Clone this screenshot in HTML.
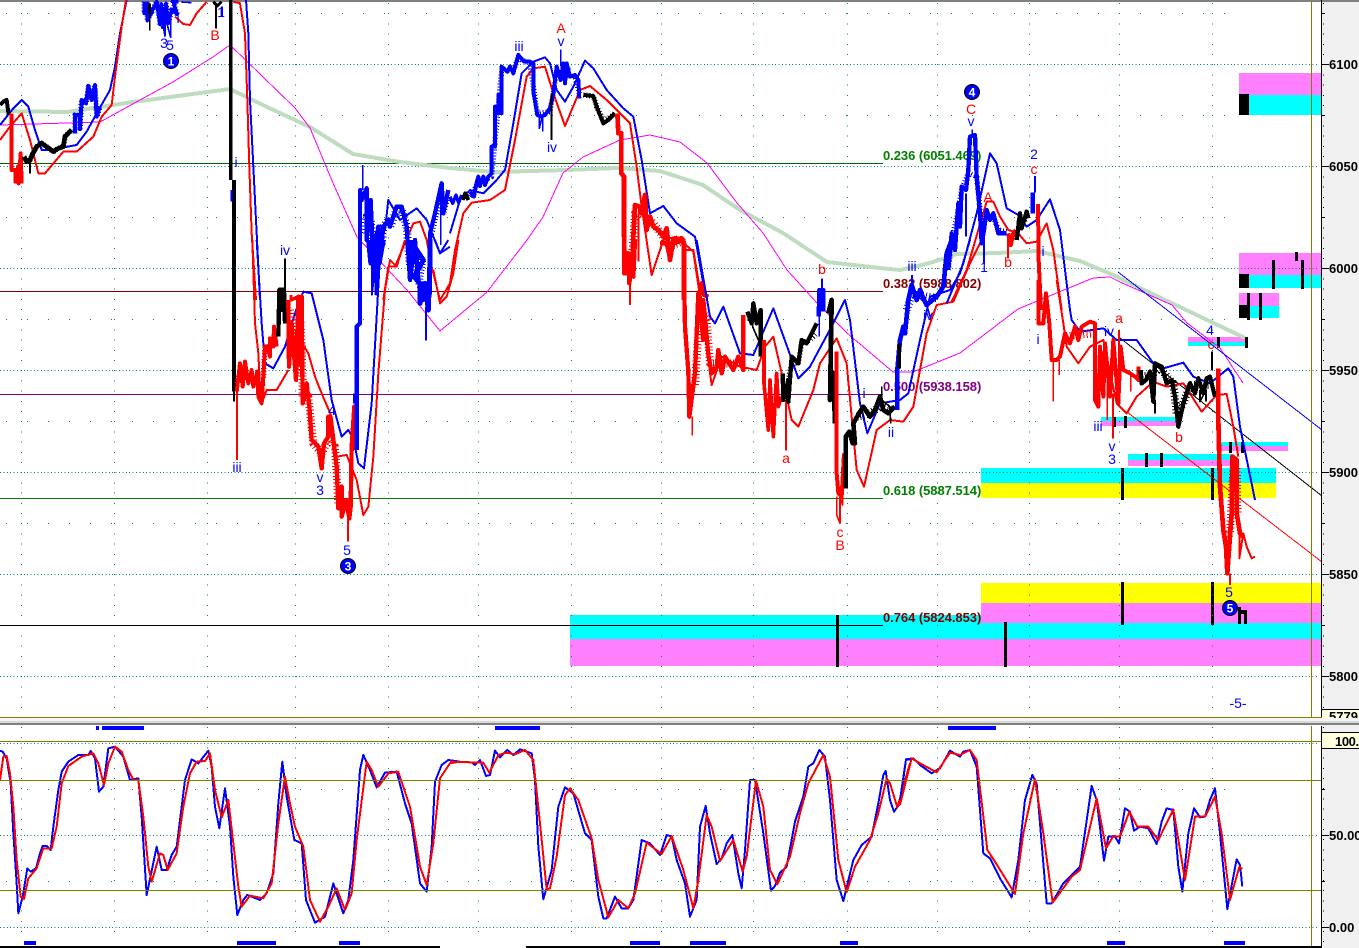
<!DOCTYPE html>
<html><head><meta charset="utf-8"><style>
html,body{margin:0;padding:0;background:#fff;width:1359px;height:948px;overflow:hidden}
svg{display:block;position:absolute;left:0;top:0}
text{font-family:"Liberation Sans",sans-serif}
.l text{font-size:14px;text-anchor:middle;fill:#0000ff}
.l text.r{fill:#ff0000}
.f text{font-size:13px;font-weight:bold;letter-spacing:-.05px}
.a text{font-size:13px;font-weight:bold;fill:#000}
polyline{fill:none;stroke-linejoin:round}
.c{stroke-width:24;stroke-dasharray:3 7}
.d{stroke-width:16;stroke-dasharray:3 6}
</style></head><body>
<svg width="1359" height="948" viewBox="0 0 1359 948" xmlns="http://www.w3.org/2000/svg">
<rect x="0" y="0" width="1359" height="948" fill="#fff"/>
<rect x="1322" y="2" width="37" height="946" fill="#f0f0f0"/>
<rect x="0" y="0" width="1359" height="2" fill="#808080"/>

<!-- bands -->
<g shape-rendering="crispEdges">
<rect x="570" y="615" width="752" height="24" fill="#00ffff"/>
<rect x="570" y="639" width="752" height="27" fill="#ff80ff"/>
<rect x="981" y="583" width="341" height="20" fill="#ffff00"/>
<rect x="981" y="603" width="341" height="20" fill="#ff80ff"/>
<rect x="981" y="468" width="295" height="15" fill="#00ffff"/>
<rect x="981" y="483" width="295" height="15" fill="#ffff00"/>
<rect x="1239" y="73" width="83" height="22" fill="#ff80ff"/>
<rect x="1239" y="95" width="83" height="20" fill="#00ffff"/>
<rect x="1239" y="94" width="10" height="21" fill="#000"/>
<rect x="1239" y="253" width="83" height="22" fill="#ff80ff"/>
<rect x="1239" y="275" width="83" height="13" fill="#00ffff"/>
<rect x="1239" y="274" width="10" height="14" fill="#000"/>
<rect x="1239" y="293" width="40" height="13" fill="#ff80ff"/>
<rect x="1239" y="306" width="40" height="12" fill="#00ffff"/>
<rect x="1239" y="305" width="10" height="13" fill="#000"/>
<rect x="1188" y="337" width="58" height="5" fill="#ff80ff"/>
<rect x="1188" y="342" width="58" height="4" fill="#00ffff"/>
<rect x="1101" y="417" width="76" height="4" fill="#00ffff"/>
<rect x="1101" y="421" width="76" height="5" fill="#ff80ff"/>
<rect x="1128" y="454" width="106" height="6" fill="#00ffff"/>
<rect x="1128" y="460" width="106" height="6" fill="#ff80ff"/>
<rect x="1220" y="442" width="68" height="4" fill="#00ffff"/>
<rect x="1220" y="446" width="68" height="5" fill="#ff80ff"/>
<g fill="#000">
<rect x="1121" y="468" width="3" height="32"/><rect x="1211" y="468" width="3" height="32"/>
<rect x="1121" y="582" width="3" height="43"/><rect x="1211" y="582" width="3" height="43"/>
<rect x="836" y="615" width="3" height="52"/><rect x="1004" y="622" width="3" height="45"/>
<rect x="1272" y="260" width="3" height="29"/><rect x="1301" y="260" width="3" height="29"/><rect x="1295" y="252" width="3" height="9"/>
<rect x="1247" y="293" width="3" height="27"/><rect x="1259" y="293" width="3" height="27"/>
<rect x="1217" y="337" width="3" height="11"/><rect x="1245" y="337" width="3" height="11"/>
<rect x="1114" y="417" width="2" height="10"/><rect x="1124" y="416" width="3" height="12"/>
<rect x="1145" y="453" width="3" height="14"/><rect x="1160" y="453" width="3" height="14"/>
<rect x="1229" y="442" width="3" height="11"/><rect x="1241" y="442" width="3" height="11"/>
<rect x="1238" y="607" width="3" height="17"/><rect x="1244" y="610" width="3" height="14"/><rect x="1241" y="610" width="3" height="4"/>
</g>
</g>

<!-- grid dots -->
<g stroke="#008080" stroke-width="1" shape-rendering="crispEdges" fill="none">
<g stroke-dasharray="1 2.4">
<path d="M0 64.5H1318M0 166.5H1318M0 268.5H1318M0 370.5H1318M0 472.5H1318M0 574.5H1318M0 676.5H1318"/>
<path d="M0 743.5H1318M0 835.5H1318M0 927.5H1318"/>
</g>
<g stroke-dasharray="1 20">
<path d="M6 13.5H1226M6 115.5H1226M6 217.5H1226M6 319.5H1226M6 421.5H1226M6 523.5H1226M6 789.5H1226M6 881.5H1226"/>
</g>
<g stroke-dasharray="1 9.2">
<path d="M21.5 3V716M114.5 3V716M207.5 3V716M295.5 3V716M388.5 3V716M478.5 3V716M571.5 3V716M661.5 3V716M753.5 3V716M847.5 3V716M937.5 3V716M1029.5 3V716M1119.5 3V716M1212.5 3V716"/>
<path d="M21.5 727V940M114.5 727V940M207.5 727V940M295.5 727V940M388.5 727V940M478.5 727V940M571.5 727V940M661.5 727V940M753.5 727V940M847.5 727V940M937.5 727V940M1029.5 727V940M1119.5 727V940M1212.5 727V940"/>
</g>
</g>

<!-- fib lines -->
<g shape-rendering="crispEdges" stroke-width="1" fill="none">
<path d="M0 163.5H883" stroke="#006400"/>
<path d="M0 291.5H883" stroke="#800000"/>
<path d="M0 394.5H883" stroke="#800080"/>
<path d="M0 498.5H883" stroke="#008000"/>
<path d="M0 625.5H883" stroke="#000"/>
</g>
<g class="f">
<text x="883" y="160" fill="#008000">0.236 (6051.469)</text>
<text x="883" y="288" fill="#800000">0.382 (5988.802)</text>
<text x="883" y="391" fill="#800080">0.500 (5938.158)</text>
<text x="883" y="495" fill="#008000">0.618 (5887.514)</text>
<text x="883" y="622" fill="#800000">0.764 (5824.853)</text>
</g>

<!-- long MA -->
<polyline stroke="#c0dcc0" stroke-width="4" shape-rendering="crispEdges" points="0,111 67,112 133,102 230,89 267,107 310,127 353,154 400,162 450,168 493,172 567,170 617,168 660,171 703,185 740,210 783,233 827,262 880,268 900,270 930,263 957,254 997,253 1037,251 1080,261 1113,275 1140,288 1245,338"/>
<g shape-rendering="crispEdges">
<!-- magenta -->
<polyline stroke="#ff00ff" stroke-width="1" points="0,125 100,122 140,100 173,82 213,57 230,45 295,108 310,128 333,183 357,237 407,290 440,331 487,292 527,240 543,217 563,173 583,157 620,140 650,135 680,142 707,163 737,203 763,233 787,270 817,303 847,333 893,372 913,372 960,353 1018,309 1093,278 1110,277 1120,282 1172,305 1187,323 1220,348 1243,383"/>
<!-- diagonals -->
<g stroke-width="1" fill="none">
<path d="M1118 272L1322 430" stroke="#0000ff"/>
<path d="M1120 338L1322 496" stroke="#000"/>
<path d="M1127 412L1322 562" stroke="#ff0000"/>
</g>

<!-- Z1 -->
<g transform="scale(.33333)">
<g stroke-width="6">
<polyline stroke="#0000ff" points="0,375 40,325 65,300 85,320 105,390 125,450 150,450 230,435 260,395 290,340 330,270 345,200 360,100 380,0"/>
<polyline stroke="#0000ff" points="738,0 745,100 750,300 760,500 770,700 780,900"/>
<polyline stroke="#0000ff" points="1155,690 1165,600 1200,660 1250,625 1280,660 1320,760 1350,740"/>
<polyline stroke="#ff0000" points="0,420 30,380 65,340 90,420 115,520 135,520 190,455 230,455 280,410 305,350 335,315 345,230 365,80 378,0"/>
<polyline stroke="#ff0000" points="700,5 720,10 735,100 742,300 748,500 755,700 768,900"/>
<polyline stroke="#ff0000" points="525,50 550,72 570,75 590,40 620,5"/>
<polyline stroke="#ff0000" points="1150,900 1165,800 1185,800 1240,670 1260,665 1280,720 1295,800 1320,900 1350,850"/>
</g>
<!-- big black -->
<polyline stroke="#000" stroke-width="11" points="692,0 692,540"/>
<polyline stroke="#000" stroke-width="11" points="702,540 702,900"/>
<polyline stroke="#0000ff" stroke-width="6" points="694,570 694,605"/>
<!-- price -->
<polyline stroke="#000" stroke-width="12" points="0,315 10,305 20,300 26,345"/>
<polyline stroke="#ff0000" stroke-width="12" points="35,340 35,510 46,510 46,545 54,500 56,550 62,460 65,550"/>
<polyline stroke="#000" stroke-width="14" points="72,470 80,485 90,480 96,465 110,440 125,430 140,440 160,455 175,445 190,440 195,410 215,390"/>
<polyline class="d" stroke="#000" points="72,470 80,485 90,480 96,465 110,440 125,430 140,440 160,455 175,445 190,440 195,410 215,390"/>
<polyline stroke="#000" stroke-width="6" points="90,480 90,520"/>
<polyline stroke="#0000ff" stroke-width="12" points="225,400 225,345 240,345 240,385 245,300 258,310 265,260 275,300 285,255 290,350 300,320"/>
<polyline class="d" stroke="#0000ff" points="225,400 225,345 240,345 240,385 245,300 258,310 265,260 275,300 285,255 290,350 300,320"/>
<polyline stroke="#0000ff" stroke-width="11" points="433,5 433,40 442,12 442,62 470,5 480,70 484,12 490,80 498,10 505,70 515,30 530,40 520,5 535,5"/>
<polyline class="d" stroke="#0000ff" points="433,5 433,40 442,12 442,62 470,5 480,70 484,12 490,80 498,10 505,70 515,30 530,40 520,5 535,5"/>
<polyline stroke="#0000ff" stroke-width="5" points="490,80 495,108 495,50 512,112 512,50"/>
<polyline stroke="#0000ff" stroke-width="5" points="545,6 575,8"/>
<polyline stroke="#000" stroke-width="9" points="449,10 449,42"/>
<polyline stroke="#000" stroke-width="5" points="449,42 449,92"/>
<polyline stroke="#000" stroke-width="9" points="640,5 652,18 665,5"/>
<polyline stroke="#000" stroke-width="5" points="648,15 648,85"/>
<polyline stroke="#0000ff" stroke-width="5" points="666,20 666,50"/>
<polyline stroke="#000" stroke-width="11" points="838,895 838,868 850,868 850,895"/>
<polyline stroke="#000" stroke-width="5" points="855,775 855,870"/>
<polyline stroke="#ff0000" stroke-width="10" points="873,885 873,900 895,890"/>
<polyline stroke="#0000ff" stroke-width="13" points="1080,900 1080,570 1085,600 1100,565 1100,720 1112,600 1120,800 1130,700 1130,880 1135,680 1145,730 1150,680 1165,660 1170,680 1190,620 1205,620 1220,680 1230,840 1245,720 1255,840 1270,900 1290,880 1290,700 1305,640 1325,550 1330,640 1345,570"/>
<polyline class="c" stroke="#0000ff" points="1090,700 1100,650 1112,660 1120,740 1130,720 1135,700 1145,730 1150,680 1165,660 1170,680 1190,630 1205,630 1220,680 1230,800 1245,760 1255,840 1270,880"/>
<polyline class="d" stroke="#0000ff" points="1290,720 1305,660 1325,590 1330,640 1345,590"/>
<polyline stroke="#0000ff" stroke-width="5" points="1088,495 1088,570"/>
<polyline stroke="#0000ff" stroke-width="5" points="1322,545 1322,735"/>
</g>
<!-- Z2 -->
<g transform="translate(220,240) scale(.33333)">
<g stroke-width="6">
<polyline stroke="#0000ff" points="110,0 125,250 135,370 160,385 195,320 225,220 250,155 275,160 310,300 335,480 365,590 385,570 400,595 415,670 432,685 455,490 470,230 480,50 490,0"/>
<polyline stroke="#0000ff" points="645,0 660,40 685,0"/>
<polyline stroke="#ff0000" points="97,0 105,250 115,340 120,440 125,490 140,450 170,450 205,390"/>
<polyline stroke="#ff0000" points="250,315 265,340 285,410 305,460 335,530 350,650 380,645 410,720 430,825 445,800 460,650 475,400 495,150 510,60 530,80 555,0"/>
<polyline stroke="#ff0000" points="640,90 660,190 680,170 700,100 715,0"/>
</g>
<polyline stroke="#000" stroke-width="11" points="42,0 42,455"/>
<polyline stroke="#000" stroke-width="5" points="42,455 42,485"/>
<polyline stroke="#ff0000" stroke-width="6" points="51,430 51,660"/>
<polyline stroke="#ff0000" stroke-width="12" points="50,455 60,370 68,440 75,365 85,430 95,390 100,440 112,395 115,470 125,490 130,410 135,320 142,320 150,350 150,295 160,320 162,260 170,320"/>
<polyline class="d" stroke="#ff0000" points="50,430 60,400 75,400 85,420 100,420 112,430 130,420 135,320 150,320 170,300"/>
<polyline stroke="#000" stroke-width="13" points="175,290 178,150 185,210 192,150 195,250"/>
<polyline stroke="#000" stroke-width="5" points="195,55 195,200"/>
<polyline stroke="#ff0000" stroke-width="13" points="205,180 207,380 215,250 228,420 235,170 240,375 245,170 248,490 260,430 268,500 275,600 295,620 305,685 312,610 325,590 325,530 340,600 350,680 355,805 365,740 365,830 378,780 388,835 392,800 395,620 403,500 408,630"/>
<polyline class="c" stroke="#ff0000" points="210,210 225,300 240,230 245,300 248,470 265,470 280,610 305,640 325,600 345,620 355,790 385,790"/>
<polyline stroke="#ff0000" stroke-width="5" points="384,780 384,905"/>
<polyline stroke="#0000ff" stroke-width="13" points="420,0 420,250 410,260 410,630"/>
<polyline stroke="#0000ff" stroke-width="6" points="402,460 402,490"/>
<polyline stroke="#0000ff" stroke-width="14" points="445,0 452,70 460,10 463,105 470,20 478,70 490,0"/>
<polyline stroke="#0000ff" stroke-width="5" points="456,70 456,165 466,80 466,165"/>
<polyline stroke="#0000ff" stroke-width="15" points="572,0 572,50 590,30 610,60 582,110 600,130 600,190 615,130 625,210 630,60 630,0"/>
<polyline class="d" stroke="#0000ff" points="572,40 590,50 610,60 600,130 615,170 625,190"/>
<polyline stroke="#0000ff" stroke-width="5" points="618,200 618,302"/>
<polyline stroke="#ff0000" stroke-width="13" points="1212,0 1212,100 1225,40 1228,130 1240,30 1240,110 1245,0"/>
<polyline stroke="#ff0000" stroke-width="5" points="1230,100 1230,195"/>
</g>
<!-- Z3 -->
<g transform="translate(450,0) scale(.33333)">
<g stroke-width="6">
<polyline stroke="#0000ff" points="0,700 30,600 60,570 100,580 140,540 165,510 190,370 215,220 250,185 285,172 300,190 320,270 345,305 370,260 405,182 430,205 470,270 520,325 550,350 575,480 600,640 640,618 680,670 735,710 765,880"/>
<polyline stroke="#ff0000" points="0,850 15,750 40,640 65,608 120,600 165,570 195,420 230,230 250,205 285,200 310,280 345,378 390,270 420,258 470,300 500,330 540,370 560,500 575,620 605,825 640,720 680,710 730,755 750,890"/>
</g>
<polyline stroke="#0000ff" stroke-width="10" points="0,590 8,610 18,585 26,608 35,585"/>
<polyline stroke="#000" stroke-width="12" points="38,600 46,580 55,600"/>
<polyline stroke="#0000ff" stroke-width="12" points="60,575 72,590 78,555 85,530 90,558 100,530 105,555 115,530 125,520 125,440 135,440 135,320 145,340 145,285 155,340 155,200 172,215 180,200 190,220 205,165 222,185 240,185 250,190 250,275 262,345 272,350 285,345 300,325 310,280 320,200 332,240 340,190 345,250 350,190 360,230 375,225 385,240 388,295"/>
<polyline class="d" stroke="#0000ff" points="60,590 85,550 100,540 125,530 155,210 190,210 205,175 240,190 262,340 300,335 320,220 375,230 388,280"/>
<polyline class="c" stroke="#0000ff" points="320,220 335,210 360,215"/>
<polyline stroke="#0000ff" stroke-width="5" points="332,148 332,200"/>
<polyline stroke="#0000ff" stroke-width="5" points="268,345 268,385 278,345 278,395"/>
<polyline stroke="#000" stroke-width="6" points="305,280 305,420"/>
<polyline stroke="#000" stroke-width="12" points="400,285 430,288 440,320 460,370 475,360 495,340"/>
<polyline class="d" stroke="#000" points="400,285 430,288 440,320 460,360 475,355 495,340"/>
<polyline stroke="#ff0000" stroke-width="14" points="502,340 505,400 514,400 514,520 522,530 522,700 525,820 545,820 550,710 555,615 568,620 575,640 585,585 590,690 600,650 610,680 625,690 640,710 650,685 660,780 670,720 695,715 702,730 702,900"/>
<polyline class="c" stroke="#ff0000" points="525,800 545,800 555,640 568,640 585,650 610,670 640,710 660,740 695,725"/>
<polyline stroke="#ff0000" stroke-width="6" points="540,820 540,900"/>
<polyline stroke="#ff0000" stroke-width="6" points="566,640 566,785"/>
<polyline stroke="#ff0000" stroke-width="13" points="745,890 755,850 762,885 775,890"/>
<polyline stroke="#0000ff" stroke-width="11" points="1105,890 1122,890"/>
</g>
<!-- Z4 -->
<g transform="translate(660,240) scale(.33333)">
<g stroke-width="6">
<polyline stroke="#0000ff" points="110,0 150,230 165,250 190,200 240,340 280,345 340,205 385,330 415,415 450,380 520,250 555,180 570,240 600,490 622,580 660,490 720,480 745,460 780,300 810,170 870,150 900,100 930,0"/>
<polyline stroke="#ff0000" points="75,30 100,30 120,150 150,400 155,435 185,350 240,380 290,390 315,320 340,290 365,400 395,540 415,560 460,450 480,370 530,295 560,370 590,690 612,740 650,570 690,540 730,545 760,500 800,280 830,195 880,185 930,70 965,0"/>
</g>
<polyline stroke="#ff0000" stroke-width="13" points="0,10 20,10 30,55 40,10 70,0 75,260 85,395 88,530 105,400 115,160 130,300 130,180 145,345 155,400 170,380 175,330 185,400 195,350 220,390 235,350 250,390 250,225"/>
<polyline class="c" stroke="#ff0000" points="90,440 105,440 120,200 140,240 150,370 185,370 220,370 245,370"/>
<polyline stroke="#ff0000" stroke-width="5" points="97,530 97,587"/>
<polyline stroke="#000" stroke-width="13" points="262,215 275,250 280,190 290,250 302,210 302,350"/>
<polyline class="d" stroke="#000" points="262,235 300,235"/>
<polyline stroke="#000" stroke-width="5" points="278,185 278,260 308,330 308,365"/>
<polyline stroke="#ff0000" stroke-width="11" points="312,300 312,430 325,570 330,420 340,590 350,400 355,500 365,470"/>
<polyline class="c" stroke="#ff0000" points="315,480 355,480"/>
<polyline stroke="#ff0000" stroke-width="6" points="378,480 378,632"/>
<polyline stroke="#000" stroke-width="13" points="368,400 370,480 385,420 385,485 395,350 415,370 425,300 440,310 450,290 470,250"/>
<polyline class="d" stroke="#000" points="385,420 395,370 415,370 425,310 450,300 470,280"/>
<polyline stroke="#0000ff" stroke-width="13" points="476,230 478,150 490,150 490,215"/>
<polyline stroke="#0000ff" stroke-width="5" points="486,115 486,160 478,220 478,290"/>
<polyline stroke="#000" stroke-width="14" points="505,220 515,180 510,480 520,400 525,550"/>
<polyline stroke="#ff0000" stroke-width="12" points="530,335 530,700 535,760 545,770 552,640"/>
<polyline stroke="#ff0000" stroke-width="5" points="530,770 530,825 540,850 540,770 548,795 548,770"/>
<polyline stroke="#000" stroke-width="14" points="557,745 557,590 568,575 578,610 585,610 580,550 600,515 610,500 630,530 645,510 660,470 670,510 685,520 705,500"/>
<polyline class="c" stroke="#000" points="590,530 630,520 660,500 700,510"/>
<polyline stroke="#000" stroke-width="5" points="665,440 665,480 690,500 692,550"/>
<polyline stroke="#0000ff" stroke-width="14" points="712,510 712,390 720,300 730,260 735,280 745,180 755,135 770,180 780,150 790,175 800,195 830,170 850,140 860,40 875,0"/>
<polyline class="c" stroke="#0000ff" points="740,210 755,165 780,165 830,175"/>
<polyline stroke="#0000ff" stroke-width="5" points="756,105 756,150 800,195 812,235"/>
<polyline stroke="#000" stroke-width="10" points="718,310 718,385"/>
</g>
<!-- Z5 -->
<g transform="translate(880,70) scale(.33333)">
<g stroke-width="6">
<polyline stroke="#0000ff" points="200,700 250,580 290,430 330,250 350,280 380,415 415,435 440,470 470,450 510,388 540,480 570,720 575,750"/>
<polyline stroke="#ff0000" points="215,695 260,600 295,480 320,395 340,395 360,440 385,480 415,490 440,520 470,515 500,460 520,540 545,720"/>
</g>
<polyline stroke="#0000ff" stroke-width="13" points="205,600 215,490 225,540 235,400 240,470 245,350 258,360 265,300 270,200 285,195 290,320 300,430 305,520 312,480 320,420 330,450 340,430 355,490 380,490"/>
<polyline class="d" stroke="#0000ff" points="205,600 215,510 235,420 245,360 265,310 290,320 305,470 320,440 340,440 355,480 380,485"/>
<polyline stroke="#0000ff" stroke-width="5" points="277,178 277,200"/>
<polyline stroke="#0000ff" stroke-width="5" points="312,500 312,580"/>
<polyline stroke="#0000ff" stroke-width="5" points="258,370 258,500"/>
<polyline stroke="#ff0000" stroke-width="13" points="385,490 392,525 400,490 408,480"/>
<polyline stroke="#ff0000" stroke-width="5" points="384,500 384,565"/>
<polyline stroke="#000" stroke-width="13" points="410,510 420,430 425,475 440,425 445,445"/>
<polyline class="d" stroke="#000" points="412,460 445,445"/>
<polyline stroke="#0000ff" stroke-width="14" points="458,368 458,430"/>
<polyline stroke="#0000ff" stroke-width="5" points="465,318 465,368"/>
<polyline stroke="#ff0000" stroke-width="12" points="474,402 476,570 483,720"/>
<polyline stroke="#ff0000" stroke-width="6" points="497,720 497,670"/>
</g>
<!-- Z6 -->
<g transform="translate(1020,280) scale(.33333)">
<g stroke-width="6">
<polyline stroke="#0000ff" points="150,90 155,120 180,155 250,145 290,180 350,180 400,250 430,265 490,248 520,290 570,310 625,265 640,290 660,440 705,660"/>
<polyline stroke="#ff0000" points="110,0 130,130 140,200 175,250 210,200 250,180 290,370 320,400 350,350 400,305 440,320 490,310 545,395 590,345 620,342 640,440 655,530"/>
</g>
<polyline stroke="#ff0000" stroke-width="12" points="55,0 55,130 70,130 78,40 88,130 95,240 110,240 120,230 135,160 150,190 165,140 175,180 185,140 210,125 225,130 225,360 235,380 240,200 250,350 255,190 270,350 280,180 295,370 302,200 310,270 330,280 345,290 355,300 355,260"/>
<polyline class="c" stroke="#ff0000" points="130,170 215,160"/>
<polyline stroke="#ff0000" stroke-width="30" stroke-dasharray="3 3" points="235,270 300,270"/>
<polyline stroke="#ff0000" stroke-width="5" points="100,240 100,365"/>
<polyline stroke="#ff0000" stroke-width="5" points="118,240 118,285"/>
<polyline stroke="#ff0000" stroke-width="5" points="262,300 262,420"/>
<polyline stroke="#ff0000" stroke-width="5" points="279,340 279,475"/>
<polyline stroke="#ff0000" stroke-width="5" points="297,150 297,260"/>
<polyline stroke="#ff0000" stroke-width="5" points="332,280 332,335"/>
<polyline stroke="#000" stroke-width="13" points="362,270 365,310 378,300 390,275 400,365 405,250 425,260 440,310 455,300 465,350 475,440 490,370 510,310 525,340 535,295 550,340 560,295 570,290 585,350"/>
<polyline class="c" stroke="#000" points="365,290 395,285 420,265 445,295 460,310 470,400 490,370 510,315 570,315"/>
<polyline stroke="#000" stroke-width="5" points="405,360 405,400"/>
<polyline stroke="#000" stroke-width="5" points="540,330 540,365 558,330 558,365"/>
<polyline stroke="#000" stroke-width="5" points="576,215 576,270"/>
<polyline stroke="#ff0000" stroke-width="14" points="595,265 595,420 600,620 610,750 618,800 622,880 632,740 635,700 637,530 650,540 650,700 660,760 670,770"/>
<polyline class="c" stroke="#ff0000" points="615,780 630,760 640,560 650,560 652,700"/>
<polyline stroke="#ff0000" stroke-width="5" points="630,880 630,915"/>
<polyline stroke="#ff0000" stroke-width="6" points="658,740 658,835 670,760 680,800 695,835 705,830"/>
</g>

<!-- Oscillator -->
<g transform="translate(0,700) scale(.33333)" stroke-width="6">
<polyline stroke="#0000ff" points="0,152 8,155 20,175 32,250 40,400 50,550 55,640 68,590 82,505 92,515 108,505 120,460 128,438 140,438 152,450 160,380 175,270 185,215 205,185 235,165 265,165 272,153 285,175 297,275 310,260 325,145 345,140 370,170 390,240 415,235 425,350 440,585 470,440 485,510 500,510 515,465 530,440 555,240 575,178 595,190 625,152 635,200 645,320 658,385 675,265 690,380 700,530 712,645 730,600 742,585 780,600 800,580 820,520 835,310 847,185 860,290 883,420 905,430 918,600 945,668 975,650 1000,550 1030,640 1045,600 1060,480 1080,210 1090,165 1110,210 1130,262 1155,218 1190,215 1215,310 1235,370 1260,550 1280,575 1295,440 1305,245 1325,195 1345,180 1380,185"/>
<polyline stroke="#ff0000" points="0,240 10,170 20,168 30,220 40,320 50,480 62,590 72,597 85,535 110,505 130,445 155,445 170,380 185,250 205,198 245,170 280,160 295,190 312,255 325,190 345,140 365,155 385,210 400,240 415,240 430,350 445,500 455,545 480,460 490,465 503,510 530,460 550,320 570,220 590,185 615,183 630,160 645,270 665,352 685,300 700,430 715,560 725,620 750,587 790,595 815,550 835,370 855,230 870,310 885,380 910,440 930,600 960,665 985,620 1010,565 1035,630 1055,580 1070,420 1100,185 1115,210 1135,260 1165,220 1195,215 1230,320 1260,500 1280,555 1300,430 1320,235 1350,190 1380,185"/>
</g>
<g transform="translate(450,700) scale(.33333)" stroke-width="6">
<polyline stroke="#0000ff" points="0,185 65,187 75,195 90,180 108,228 120,225 135,152 150,172 172,150 190,165 210,148 245,160 255,240 265,440 280,598 305,510 325,320 345,262 370,280 405,400 425,420 445,590 460,655 470,655 495,590 515,625 535,625 550,600 575,420 600,430 630,465 650,405 665,410 680,480 705,550 720,650 740,600 750,380 767,318 780,400 800,492 815,475 830,430 847,405 865,520 875,565 885,450 900,240 915,240 940,400 963,572 975,558 990,518 1010,500 1035,365 1060,290 1075,200 1090,190 1108,150 1125,170 1140,300 1160,540 1180,603 1210,480 1235,435 1265,410 1285,310 1300,225 1307,213 1320,300 1332,335 1350,310 1368,178 1380,178"/>
<polyline stroke="#ff0000" points="0,185 100,188 118,218 145,165 170,158 195,163 225,150 250,180 270,370 290,568 300,565 320,470 345,285 360,265 385,300 425,415 445,540 475,652 505,600 535,625 555,580 590,428 635,462 665,408 700,510 730,625 745,540 770,345 785,380 810,483 850,420 878,515 890,470 918,242 940,320 960,510 982,553 1020,470 1050,340 1075,250 1120,165 1140,230 1165,480 1190,577 1215,500 1260,420 1285,340 1310,235 1320,250 1342,322 1380,190"/>
</g>
<g transform="translate(900,700) scale(.33333)" stroke-width="6">
<polyline stroke="#0000ff" points="0,300 18,178 40,175 60,195 95,220 120,205 150,152 180,170 190,155 210,150 230,200 250,460 270,475 300,535 335,592 355,480 375,300 397,225 410,250 440,610 455,610 490,550 515,525 540,500 575,258 590,300 612,482 625,410 645,410 657,430 675,325 690,335 702,392 720,380 745,385 770,432 785,365 800,325 820,330 835,500 847,575 865,400 882,325 900,352 915,350 930,300 945,265 960,400 982,627 1000,530 1010,478 1020,495 1027,560"/>
<polyline stroke="#ff0000" points="0,315 35,175 60,190 110,217 150,158 180,165 210,150 230,180 262,450 285,485 345,582 370,400 405,238 430,400 458,608 515,530 540,510 590,295 618,445 640,408 660,410 688,335 712,380 745,380 775,420 820,328 855,540 885,350 915,350 945,290 965,400 990,600 1018,500 1027,507"/>
</g>

<!-- olive -->
<g stroke="#808000" stroke-width="1" fill="none">
<path d="M0 717.5H1322M0 741.5H1322M0 780.5H1322M0 890.5H1322"/>
<path d="M1311.5 2V948"/>
</g>
<!-- separator -->
<rect x="0" y="718" width="1359" height="3" fill="#f4f4f4"/>
<rect x="0" y="721" width="1359" height="2" fill="#d8d8d8"/>
<rect x="0" y="723" width="1359" height="2" fill="#808080"/>
<rect x="0" y="725" width="1359" height="1" fill="#fff"/>
<rect x="1322" y="725" width="37" height="1" fill="#f0f0f0"/>
<!-- blue marks -->
<g fill="#0000ff">
<rect x="96" y="726" width="3" height="4"/><rect x="102" y="726" width="42" height="4"/>
<rect x="495" y="726" width="45" height="4"/><rect x="948" y="726" width="48" height="4"/>
<rect x="24" y="941" width="12" height="4"/><rect x="237" y="941" width="39" height="4"/><rect x="339" y="941" width="21" height="4"/>
<rect x="630" y="941" width="30" height="4"/><rect x="690" y="941" width="36" height="4"/><rect x="840" y="941" width="18" height="4"/>
<rect x="1107" y="941" width="18" height="4"/><rect x="1224" y="941" width="21" height="4"/>
</g>
<!-- bottom axis -->
<g fill="#000">
<rect x="0" y="946" width="440" height="2"/><rect x="526" y="946" width="796" height="2"/>
<rect x="45" y="946" width="1" height="2"/>
</g>
<!-- right axis -->
<rect x="1321" y="0" width="1" height="717" fill="#000"/>
<rect x="1321" y="726" width="1" height="222" fill="#000"/>
<g stroke="#000" stroke-width="1" fill="none">
<path d="M1323.5 3V716" stroke-dasharray="1 9.2"/>
<path d="M1323.5 727V948" stroke-dasharray="1 9.2"/>
<path d="M1322 13.5h3M1322 115.5h3M1322 217.5h3M1322 319.5h3M1322 421.5h3M1322 523.5h3M1322 625.5h3M1322 789.5h3M1322 881.5h3"/>
<path d="M1322 64.5h7M1322 166.5h7M1322 268.5h7M1322 370.5h7M1322 472.5h7M1322 574.5h7M1322 676.5h7M1322 835.5h7M1322 927.5h7"/>
</g>
</g>
<rect x="1322" y="710" width="37" height="8" fill="#ffffe0"/>
<rect x="1322" y="733" width="37" height="15" fill="#ffffe0"/>
<rect x="1322" y="732" width="37" height="1" fill="#000"/>
<rect x="1322" y="748" width="37" height="1" fill="#000"/>
<rect x="1322" y="709" width="37" height="1" fill="#000"/>
<g class="a">
<text x="1329" y="69">6100</text>
<text x="1329" y="171">6050</text>
<text x="1329" y="273">6000</text>
<text x="1329" y="375">5950</text>
<text x="1329" y="477">5900</text>
<text x="1329" y="579">5850</text>
<text x="1329" y="681">5800</text>
<text x="1329" y="840">50.00</text>
<text x="1329" y="932">0.00</text>
</g>
<svg x="1322" y="710" width="37" height="8"><text x="7" y="11" style="font-size:13px;font-weight:bold">5779</text></svg>
<text x="1335" y="746" style="font-size:13px;font-weight:bold;letter-spacing:-.4px">100.</text>

<!-- labels -->
<g class="l">
<text x="164" y="48">3</text><text x="170" y="50">5</text><text x="178" y="23">i</text><text x="221" y="17">1</text><text class="r" x="215" y="40">B</text>
<text x="236" y="167">i</text><text x="231" y="200">i</text><text x="285" y="255">iv</text><text x="237" y="472">iii</text>
<text x="320" y="482">v</text><text x="320" y="495">3</text><text x="332" y="415">4</text><text x="347" y="555">5</text>
<text x="519" y="51">iii</text><text class="r" x="561" y="33">A</text><text x="561" y="46">v</text><text x="552" y="152">iv</text>
<text class="r" x="822" y="274">b</text><text class="r" x="786" y="463">a</text><text class="r" x="840" y="537">c</text><text class="r" x="840" y="550">B</text>
<text x="864" y="398">i</text><text x="891" y="437">ii</text><text x="912" y="271">iii</text><text x="928" y="320">iv</text>
<text x="984" y="272">1</text><text class="r" x="1008" y="267">b</text><text class="r" x="988" y="202">A</text><text class="r" x="971" y="114">C</text><text x="971" y="126">v</text>
<text x="1034" y="159">2</text><text class="r" x="1034" y="174">c</text><text x="1043" y="256">i</text><text x="1038" y="344">i</text>
<text class="r" x="1119" y="323">a</text><text x="1109" y="336">iv</text><text x="1098" y="431">iii</text><text x="1112" y="451">v</text><text x="1112" y="464">3</text>
<text class="r" x="1179" y="442">b</text><text x="1210" y="335">4</text><text class="r" x="1211" y="349">c</text><text x="1229" y="597">5</text><text x="1238" y="708">-5-</text>
</g>
<g>
<circle cx="171" cy="61" r="7.5" fill="#0000ff" stroke="#000" stroke-width="1"/><text x="171" y="65.5" text-anchor="middle" fill="#fff" style="font-size:12px;font-weight:bold">1</text>
<circle cx="348" cy="566" r="7.5" fill="#0000ff" stroke="#000" stroke-width="1"/><text x="348" y="570.5" text-anchor="middle" fill="#fff" style="font-size:12px;font-weight:bold">3</text>
<circle cx="972" cy="92" r="7.5" fill="#0000ff" stroke="#000" stroke-width="1"/><text x="972" y="96.5" text-anchor="middle" fill="#fff" style="font-size:12px;font-weight:bold">4</text>
<circle cx="1230" cy="608" r="7.5" fill="#0000ff" stroke="#000" stroke-width="1"/><text x="1230" y="612.5" text-anchor="middle" fill="#fff" style="font-size:12px;font-weight:bold">5</text>
</g>
</svg>
</body></html>
